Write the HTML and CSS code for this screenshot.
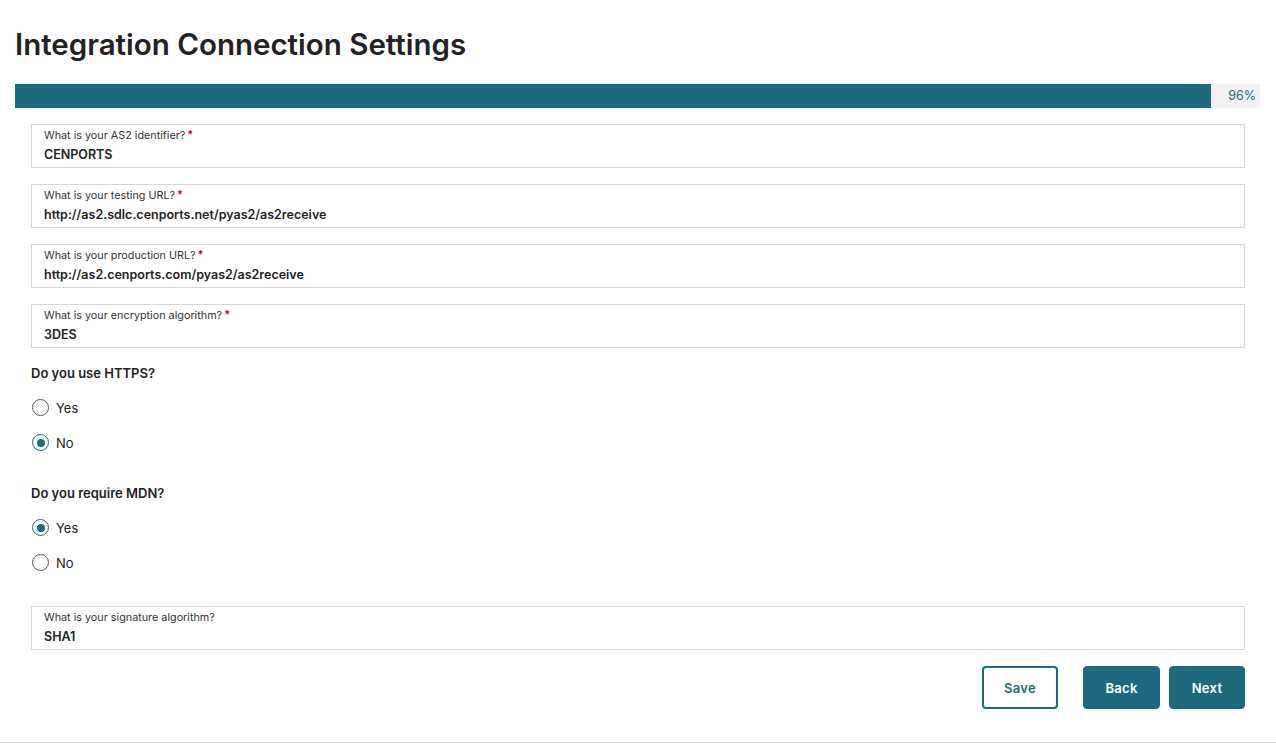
FILE: index.html
```html
<!DOCTYPE html>
<html>
<head>
<meta charset="utf-8">
<link rel="stylesheet" href="styles.css">
</head>
<body>
<div class="page">
  <h1 class="title">Integration Connection Settings</h1>
  <div class="progress">
    <div class="progress-fill" style="width:96.1%"></div>
    <span class="progress-label">96%</span>
  </div>
  <form class="form">
    <div class="field">
      <div class="field-label">What is your AS2 identifier?<span class="req">*</span></div>
      <div class="field-value">CENPORTS</div>
    </div>
    <div class="field">
      <div class="field-label">What is your testing URL?<span class="req">*</span></div>
      <div class="field-value">http://as2.sdlc.cenports.net/pyas2/as2receive</div>
    </div>
    <div class="field">
      <div class="field-label">What is your production URL?<span class="req">*</span></div>
      <div class="field-value">http://as2.cenports.com/pyas2/as2receive</div>
    </div>
    <div class="field">
      <div class="field-label">What is your encryption algorithm?<span class="req">*</span></div>
      <div class="field-value">3DES</div>
    </div>

    <div class="question q1">Do you use HTTPS?</div>
    <div class="radio-row"><span class="radio"></span><span class="radio-text">Yes</span></div>
    <div class="radio-row"><span class="radio checked"></span><span class="radio-text">No</span></div>

    <div class="question q2">Do you require MDN?</div>
    <div class="radio-row"><span class="radio checked"></span><span class="radio-text">Yes</span></div>
    <div class="radio-row"><span class="radio"></span><span class="radio-text">No</span></div>

    <div class="field sig">
      <div class="field-label">What is your signature algorithm?</div>
      <div class="field-value">SHA1</div>
    </div>

    <div class="actions">
      <button type="button" class="btn btn-outline">Save</button>
      <button type="button" class="btn btn-solid btn-back">Back</button>
      <button type="button" class="btn btn-solid btn-next">Next</button>
    </div>
  </form>
  <div class="footer-line"></div>
</div>
</body>
</html>
```

FILE: styles.css
```css
html, body {
  margin: 0;
  padding: 0;
  background: #ffffff;
}
body {
  font-family: "Inter", "Lato", "Liberation Sans", sans-serif;
  color: #222222;
  width: 1276px;
  height: 743px;
  overflow: hidden;
}
.page {
  display: flex;
  flex-direction: column;
}
.title {
  margin: 25px 0 0 15px;
  font-size: 29.5px;
  line-height: 38px;
  font-weight: 600;
  color: #222222;
  letter-spacing: 0;
}
.progress {
  position: relative;
  margin: 21px 16px 0 15px;
  height: 24px;
  background: #f1f1f1;
  display: flex;
  align-items: center;
}
.progress-fill {
  height: 24px;
  background: #1e697e;
}
.progress-label {
  position: absolute;
  right: 4px;
  top: 0;
  line-height: 24px;
  font-size: 12.5px;
  color: #1e697e;
}
.form {
  margin: 16px 31px 0 31px;
  display: flex;
  flex-direction: column;
}
.field {
  height: 44px;
  box-sizing: border-box;
  border: 1px solid #d6d6d6;
  padding: 4px 12px 0 12px;
  margin-bottom: 16px;
}
.field-label {
  font-size: 10.8px;
  line-height: 14px;
  color: #333333;
}
.req {
  color: #d0021b;
  font-weight: 700;
  margin-left: 2px;
  position: relative;
  top: -1px;
}
.field-value {
  font-size: 12.5px;
  line-height: 18px;
  font-weight: 600;
  color: #222222;
  margin-top: 3px;
}
.question {
  font-size: 13px;
  line-height: 20px;
  font-weight: 600;
  color: #222222;
}
.q1 {
  margin-top: -1px;
  margin-bottom: 7px;
}
.q2 {
  margin-top: 23px;
  margin-bottom: 7px;
}
.radio-row {
  height: 35px;
  display: flex;
  align-items: center;
}
.radio {
  width: 17px;
  height: 17px;
  box-sizing: border-box;
  border: 1px solid #555555;
  border-radius: 50%;
  margin-left: 1px;
  position: relative;
}
.radio.checked {
  border-color: #1e697e;
}
.radio.checked::after {
  content: "";
  position: absolute;
  left: 3.5px;
  top: 3.5px;
  width: 8px;
  height: 8px;
  border-radius: 50%;
  background: #1e697e;
}
.radio-text {
  margin-left: 7px;
  font-size: 13px;
  color: #222222;
}
.sig {
  margin-top: 26px;
}
.actions {
  display: flex;
  justify-content: flex-end;
  margin-top: 0;
}
.btn {
  height: 43px;
  width: 77px;
  box-sizing: border-box;
  border-radius: 4px;
  font-family: inherit;
  font-size: 13px;
  font-weight: 600;
  letter-spacing: 0.3px;
  cursor: pointer;
}
.btn-outline {
  width: 76px;
  background: #ffffff;
  border: 2px solid #1e697e;
  color: #1e697e;
  margin-right: 25px;
}
.btn-solid {
  background: #1e697e;
  border: 1px solid #1e697e;
  color: #ffffff;
}
.btn-back {
  margin-right: 9px;
}
.btn-next {
  width: 76px;
}
.footer-line {
  margin-top: 33px;
  height: 0;
  border-top: 1px solid #d6d6d6;
}
```
